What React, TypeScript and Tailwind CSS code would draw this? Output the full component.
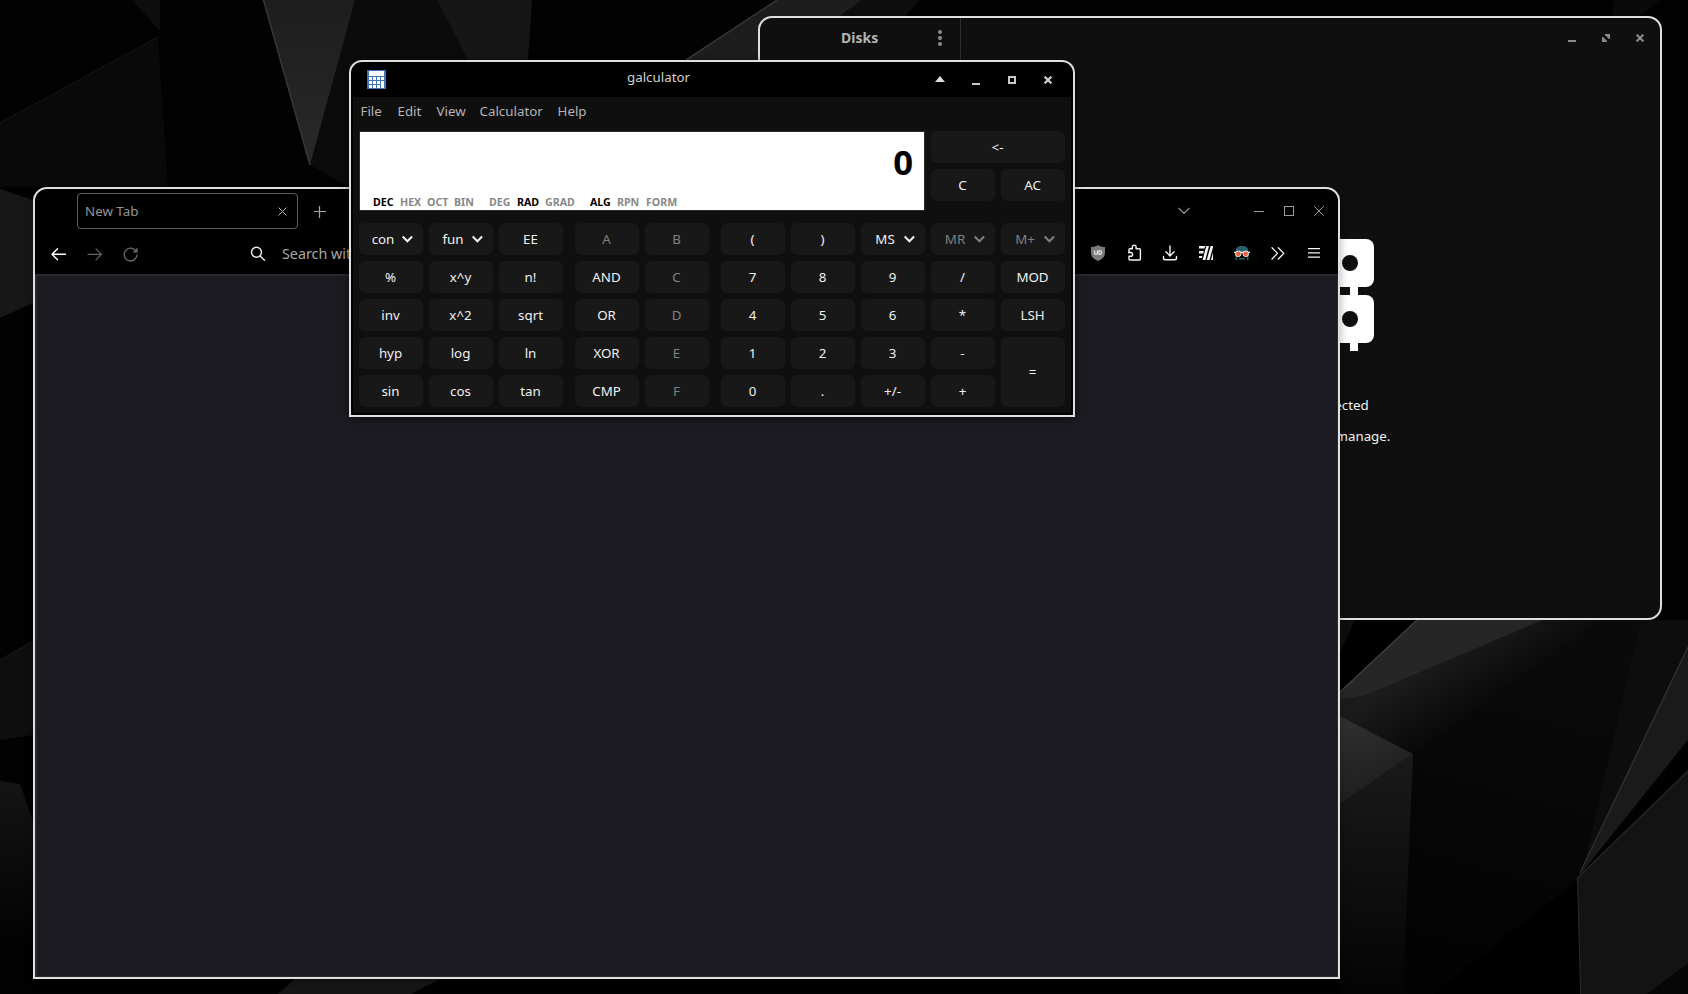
import React from "react";
import clsx from "clsx";

function Wallpaper() {
  return (
    <svg className="absolute inset-0" width="1688" height="994" viewBox="0 0 1688 994" aria-hidden="true">
      <defs>
        <linearGradient id="ridge" gradientUnits="userSpaceOnUse" x1="1450" y1="650" x2="1485" y2="705">
          <stop offset="0" stopColor="#1b1b1b" />
          <stop offset="1" stopColor="#090909" />
        </linearGradient>
        <linearGradient id="basin" gradientUnits="userSpaceOnUse" x1="1560" y1="650" x2="1480" y2="950">
          <stop offset="0" stopColor="#0a0a0a" />
          <stop offset="1" stopColor="#030303" />
        </linearGradient>
        <linearGradient id="cubeTop" gradientUnits="userSpaceOnUse" x1="1340" y1="725" x2="1370" y2="790">
          <stop offset="0" stopColor="#303030" />
          <stop offset="1" stopColor="#1f1f1f" />
        </linearGradient>
        <linearGradient id="cubeSide" x1="0" y1="0" x2="0" y2="1">
          <stop offset="0" stopColor="#1a1a1a" />
          <stop offset="1" stopColor="#040404" />
        </linearGradient>
        <linearGradient id="fade" x1="0" y1="0" x2="0" y2="1">
          <stop offset="0" stopColor="#141414" />
          <stop offset="1" stopColor="#030303" />
        </linearGradient>
        <linearGradient id="shard" x1="0" y1="0" x2="0" y2="1">
          <stop offset="0" stopColor="#1d1d1d" />
          <stop offset="1" stopColor="#292929" />
        </linearGradient>
      </defs>
      <rect width="1688" height="994" fill="#020202" />
      <polygon points="132,0 160,0 160,31" fill="#0d0d0d" />
      <polygon points="0,123 158,37 168,187 0,187" fill="#090909" />
      <path d="M0 123L158 37" stroke="#171717" />
      <polygon points="355,0 437,0 468,60 349,187 310,165" fill="#0b0b0b" />
      <polygon points="263,0 355,0 310,165" fill="url(#shard)" />
      <path d="M263.5 0L310 165" stroke="#373737" strokeWidth="1.5" />
      <polygon points="437,0 532,0 528,60 468,60" fill="#161616" />
      <polygon points="686,60 777,0 862,0 840,16 760,70" fill="#1d1d1d" />
      <polygon points="862,0 920,0 905,16 840,16" fill="#0d0d0d" />
      <path d="M686 60L777 0" stroke="#353535" strokeWidth="1.5" />
      <polygon points="1614,0 1660,0 1640,16 1612,16" fill="#0a0a0a" />
      <polygon points="0,189 33,200 33,303 0,318" fill="#171717" />
      <polygon points="0,660 33,641 33,735 0,740" fill="#0e0e0e" />
      <path d="M0 660L33 641" stroke="#1b1b1b" />
      <polygon points="0,781 20,784 33,821 33,940 0,940" fill="url(#fade)" />
      <polygon points="278,994 295,979 440,979 410,994" fill="#161616" />

      <polygon points="1340,620 1688,620 1688,994 1340,994" fill="url(#basin)" />
      <polygon points="1340,620 1417,620 1340,692" fill="#000" />
      <polygon points="1340,620 1355,620 1340,653" fill="#0d0d0d" />
      <polygon points="1417,620 1543,620 1367,695 1340,700 1340,692" fill="#262626" />
      <path d="M1417 620L1340 692" stroke="#404040" strokeWidth="1.3" />
      <polygon points="1543,620 1600,620 1423,747 1413,754 1340,716 1340,700 1367,695" fill="url(#ridge)" />
      <polygon points="1340,716 1413,754 1340,804" fill="url(#cubeTop)" />
      <polygon points="1340,804 1413,754 1403,994 1340,994" fill="url(#cubeSide)" />
      <polygon points="1641,620 1688,620 1688,647 1583,868" fill="#0d0d0d" />
      <polygon points="1688,645 1688,740 1600,850 1580,875" fill="#1a1a1a" />
      <path d="M1688 647L1580 873" stroke="#2e2e2e" strokeWidth="1.5" />
      <polygon points="1688,740 1688,771 1578,878 1600,850" fill="#010101" />
      <polygon points="1688,771 1577,878 1580,994 1688,994" fill="#131313" />
      <path d="M1688 771L1577.500 878L1580.500 994" fill="none" stroke="#262626" strokeWidth="1.5" />
      <polygon points="1647,994 1688,963 1688,994" fill="#060606" />
      <polygon points="1577,881 1433,994 1580,994" fill="#000" />
    </svg>
  );
}

function CloseGlyph({ className }: { className?: string }) {
  return (
    <svg className={className} width="8" height="8" viewBox="0 0 8 8" stroke="currentColor" strokeWidth="2.2">
      <path d="M.6 .6L7.400 7.400M7.400 .6L.6 7.400" />
    </svg>
  );
}

function DrivesIcon() {
  return (
    <svg className="mr-[2px]" width="128" height="112" viewBox="0 0 128 112" fill="#fff">
      <rect width="128" height="48" rx="8" />
      <rect y="56" width="128" height="48" rx="8" />
      <rect x="104" y="48" width="8" height="8" />
      <rect x="104" y="104" width="8" height="8" />
      <circle cx="104" cy="24" r="8" fill="#0f0f0f" />
      <circle cx="104" cy="80" r="8" fill="#0f0f0f" />
    </svg>
  );
}

function DisksWindow() {
  return (
    <section className="absolute left-[758px] top-[16px] flex h-[604px] w-[904px] overflow-hidden rounded-[14px] border-2 border-[#dfdfdf] bg-[#0f0f0f]">
      <div className="h-full w-[201px] border-r border-[#2e2e2e]">
        <header className="flex h-[40px] items-center pl-[81px] text-[#b4b4b4]">
          <h1 className="w-[93px] text-[14px] leading-[20px] font-bold">Disks</h1>
          <svg width="12" height="16" viewBox="0 0 12 16" fill="#8c8c8c">
            <circle cx="6" cy="2" r="2" />
            <circle cx="6" cy="8" r="2" />
            <circle cx="6" cy="14" r="2" />
          </svg>
        </header>
      </div>
      <div className="flex flex-1 flex-col">
        <header className="flex h-[40px] items-center justify-end gap-[26px] pr-[16px] text-[#8a8a8a]">
          <span className="mt-[6px] h-[2px] w-[8px] bg-[#8a8a8a]" />
          <svg width="8" height="8" viewBox="0 0 8 8" fill="currentColor">
            <path d="M3 0H8V5H7L5 3L3 1ZM0 3H1L3 5L5 7V8H0Z" />
          </svg>
          <CloseGlyph />
        </header>
        <div className="flex flex-col items-center pt-[181px] text-[#f2f2f2]">
          <DrivesIcon />
          <p className="mt-[44px] text-[13.33px] leading-[20px] whitespace-nowrap">No device selected</p>
          <p className="mt-[11px] pl-[5px] text-[13.33px] leading-[20px] whitespace-nowrap">Select device to manage.</p>
        </div>
      </div>
    </section>
  );
}

function BrowserWindow() {
  return (
    <section className="absolute left-[33px] top-[187px] flex h-[792px] w-[1307px] flex-col overflow-hidden rounded-t-[14px] border-2 border-[#dfdfdf] bg-black shadow-[0_2px_8px_rgba(0,0,0,0.3)]">
      <div className="flex h-[44px] items-start pt-[4px] pl-[42px]">
        <div className="flex h-[36px] w-[221px] items-center justify-between rounded-[4px] border border-[#5e5e5e] pr-[10px] pl-[7px] text-[#949494]">
          <span className="text-[13.33px] leading-[20px]">New Tab</span>
          <svg width="9" height="9" viewBox="0 0 9 9" stroke="#b8b8b8" strokeWidth="1">
            <path d="M.5 .5L8.500 8.500M8.500 .5L.5 8.500" />
          </svg>
        </div>
        <svg className="mt-[13px] ml-[16px]" width="12" height="12" viewBox="0 0 12 12" stroke="#a5a5a5" strokeWidth="1.2">
          <path d="M5.500 0V12M0 5.500H12" />
        </svg>
        <div className="ml-auto flex h-[36px] items-center pr-[14px] text-[#9c9c9c]">
          <svg className="mr-[64px]" width="12" height="8" viewBox="0 0 12 8" fill="none" stroke="currentColor" strokeWidth="1.2">
            <path d="M.5 .8L6 6.500L11.500 .8" />
          </svg>
          <span className="mr-[20px] h-px w-[10px] bg-[#9c9c9c]" />
          <span className="mr-[20px] h-[10px] w-[10px] border border-[#9c9c9c]" />
          <svg width="10" height="10" viewBox="0 0 10 10" stroke="currentColor" strokeWidth="1">
            <path d="M.2 .2L9.800 9.800M9.800 .2L.2 9.800" />
          </svg>
        </div>
      </div>

      <div className="flex h-[41px] items-center pr-[17px] pl-[16px]">
        <svg width="16" height="16" viewBox="0 0 16 16" fill="none" stroke="#fff" strokeWidth="1.4" strokeLinecap="round" strokeLinejoin="round">
          <path d="M14.500 8.300H1M6.500 2.800L1 8.300L6.500 13.800" />
        </svg>
        <svg className="ml-[20px]" width="16" height="16" viewBox="0 0 16 16" fill="none" stroke="#666" strokeWidth="1.2" strokeLinecap="round" strokeLinejoin="round">
          <path d="M1 8.300H14.500M9 2.800L14.500 8.300L9 13.800" />
        </svg>
        <svg className="ml-[20px]" width="16" height="16" viewBox="0 0 16 16" fill="none" stroke="#6a6a6a" strokeWidth="1.3" strokeLinecap="round">
          <path d="M14 9A6.400 6.400 0 1 1 12.300 4.200" />
          <path d="M14.400 2.200V6.200H10.400Z" fill="#6a6a6a" stroke="#6a6a6a" strokeWidth=".6" />
        </svg>
        <svg className="ml-[111px]" width="16" height="16" viewBox="0 0 16 16" fill="none" stroke="#ececec" strokeWidth="1.4" strokeLinecap="round">
          <circle cx="6.500" cy="6.200" r="5" />
          <path d="M10.100 9.900L14.500 14.300" />
        </svg>
        <span className="ml-[16px] text-[14.3px] leading-[20px] whitespace-nowrap text-[#a8a8a8]">Search with</span>

        <div className="ml-auto flex items-center">
          <div className="mr-[21px] mb-[2px] flex items-center">
            <svg width="16" height="16" viewBox="0 0 16 16">
              <path d="M8 0C10 1.500 12.500 2 15 2V7.500C15 12 12 14.500 8 16C4 14.500 1 12 1 7.500V2C3.500 2 6 1.500 8 0Z" fill="#7b7b7b" />
              <path d="M4.600 5.500V8Q4.600 9.400 6 9.400T7.400 8V5.500" fill="none" stroke="#e6e6e6" strokeWidth="1.2" />
              <path d="M9 5.500H9.700A1.900 1.900 0 0 1 9.700 9.300H9Z" fill="none" stroke="#e6e6e6" strokeWidth="1.2" />
            </svg>
            <svg className="ml-[20px]" width="17" height="17" viewBox="0 0 17 17" fill="none" stroke="#f4f4f4" strokeWidth="1.4" strokeLinejoin="round">
              <path d="M3 8V5.700Q3 4.700 4 4.700H6.300V3A1.900 1.900 0 0 1 10.100 3V4.700H13.400Q14.400 4.700 14.400 5.700V15Q14.400 16 13.400 16H4Q3 16 3 15V12.300H4.700A1.900 1.900 0 0 0 4.700 8.500H2" />
            </svg>
            <svg className="ml-[19px]" width="16" height="16" viewBox="0 0 16 16" fill="none" stroke="#f4f4f4" strokeWidth="1.4" strokeLinecap="round" strokeLinejoin="round">
              <path d="M8 1V10.500M3.900 6.800L8 10.900L12.100 6.800M1.500 11.500V13Q1.500 14.800 3.300 14.800H12.700Q14.500 14.800 14.500 13V11.500" />
            </svg>
            <svg className="ml-[20px]" width="16" height="16" viewBox="0 0 16 16" fill="#f2f2f2">
              <path d="M1 1H7.200L6.500 3.500H1ZM1 6H5.900L5.200 8.500H1ZM1 11H4.400L3.700 13H1ZM8.300 1H11L7.400 15H4.600ZM12.600 1H15V2.200L11.500 15H8.700ZM15 7.500V15H12.900Z" />
            </svg>
            <svg className="ml-[20px]" width="16" height="16" viewBox="0 0 16 16">
              <path d="M1.500 7C1.500 2.500 4 1 8 1S14.500 2.500 14.500 7L14.500 8H1.500Z" fill="#28606e" />
              <path d="M1.500 10H3V15H1.500ZM13 10H14.500V15H13ZM5 13H11V14.500H5Z" fill="#28606e" />
              <path d="M0 7.400H16" stroke="#f0ece8" strokeWidth="1.3" />
              <circle cx="4.300" cy="8.800" r="2.800" fill="#e8603f" stroke="#f0ece8" strokeWidth="1" />
              <circle cx="11.700" cy="8.800" r="2.800" fill="#e8603f" stroke="#f0ece8" strokeWidth="1" />
            </svg>
            <svg className="ml-[20px]" width="16" height="16" viewBox="0 0 16 16" fill="none" stroke="#f4f4f4" strokeWidth="1.3" strokeLinecap="round" strokeLinejoin="round">
              <path d="M2 2.800L7.500 8.400L2 14M8.300 2.800L13.800 8.400L8.300 14" />
            </svg>
          </div>
          <svg className="mb-[2px]" width="14" height="16" viewBox="0 0 14 16" fill="#f4f4f4">
            <path d="M1 3H13V4.300H1ZM1 7.200H13V8.500H1ZM1 11.400H13V12.700H1Z" />
          </svg>
        </div>
      </div>
      <div className="flex-1 border-t-2 border-r border-b border-l-2 border-[#2a2930] bg-[#1c1b22]" />
    </section>
  );
}

function CalculatorIcon() {
  return (
    <svg width="19" height="19" viewBox="0 0 19 19" shapeRendering="crispEdges">
      <rect width="19" height="19" fill="#4273b8" />
      <rect x="2" y="1" width="15" height="5" fill="#fff" />
      {[7, 11, 15].map((y) =>
        [2, 6, 10].map((x) => <rect key={`${x}-${y}`} x={x} y={y} width="3" height="3" fill="#fff" />),
      )}
      <rect x="14" y="7" width="3" height="3" fill="#fff" />
      <rect x="14" y="11" width="3" height="7" fill="#fff" />
    </svg>
  );
}

type KeyProps = { label: string; dim?: boolean; menu?: boolean; className?: string };

function Key({ label, dim, menu, className }: KeyProps) {
  return (
    <button
      type="button"
      className={clsx(
        "flex items-center rounded-[6px] bg-[#181818] text-[13.33px] leading-[20px]",
        menu ? "px-[7px]" : "justify-center pr-px",
        dim ? "text-[#808080]" : "text-[#f0f0f0]",
        className,
      )}
    >
      {menu ? (
        <>
          <span className="flex w-[34px] justify-center">{label}</span>
          <svg width="16" height="16" viewBox="0 0 16 16" fill="none" stroke="currentColor" strokeWidth="2">
            <path d="M2.700 5.500L7.400 10.300L12.100 5.500" />
          </svg>
        </>
      ) : (
        label
      )}
    </button>
  );
}

const functionKeys: KeyProps[] = [
  { label: "con", menu: true }, { label: "fun", menu: true }, { label: "EE" },
  { label: "%" }, { label: "x^y" }, { label: "n!" },
  { label: "inv" }, { label: "x^2" }, { label: "sqrt" },
  { label: "hyp" }, { label: "log" }, { label: "ln" },
  { label: "sin" }, { label: "cos" }, { label: "tan" },
];

const logicKeys: KeyProps[] = [
  { label: "A", dim: true }, { label: "B", dim: true },
  { label: "AND" }, { label: "C", dim: true },
  { label: "OR" }, { label: "D", dim: true },
  { label: "XOR" }, { label: "E", dim: true },
  { label: "CMP" }, { label: "F", dim: true },
];

const numberKeys: KeyProps[] = [
  { label: "(" }, { label: ")" }, { label: "MS", menu: true }, { label: "MR", menu: true, dim: true }, { label: "M+", menu: true, dim: true },
  { label: "7" }, { label: "8" }, { label: "9" }, { label: "/" }, { label: "MOD" },
  { label: "4" }, { label: "5" }, { label: "6" }, { label: "*" }, { label: "LSH" },
  { label: "1" }, { label: "2" }, { label: "3" }, { label: "-" }, { label: "=", className: "row-span-2" },
  { label: "0" }, { label: "." }, { label: "+/-" }, { label: "+" },
];

const modes = [
  { label: "DEC", on: true, width: "w-[27px]" },
  { label: "HEX", on: false, width: "w-[27px]" },
  { label: "OCT", on: false, width: "w-[27px]" },
  { label: "BIN", on: false, width: "w-[35px]" },
  { label: "DEG", on: false, width: "w-[28px]" },
  { label: "RAD", on: true, width: "w-[28px]" },
  { label: "GRAD", on: false, width: "w-[45px]" },
  { label: "ALG", on: true, width: "w-[27px]" },
  { label: "RPN", on: false, width: "w-[29px]" },
  { label: "FORM", on: false, width: "w-[32px]" },
];

const menus = [
  { label: "File", width: "w-[37px]" },
  { label: "Edit", width: "w-[39px]" },
  { label: "View", width: "w-[43px]" },
  { label: "Calculator", width: "w-[78px]" },
  { label: "Help", width: "w-[40px]" },
];

function CalculatorWindow() {
  return (
    <section className="absolute left-[349px] top-[60px] flex h-[357px] w-[726px] flex-col overflow-hidden rounded-t-[13px] border-2 border-[#dfdfdf] bg-black px-[2px] pb-[2px] shadow-[0_2px_8px_rgba(0,0,0,0.45)]">
      <header className="flex h-[35px] shrink-0 items-start pr-[19px] pl-[14px] text-[#d0d0d0]">
        <div className="mt-[8px]">
          <CalculatorIcon />
        </div>
        <h1 className="mt-[5px] ml-[241px] w-[308px] text-[13.33px] leading-[20px]">galculator</h1>
        <svg className="mt-[14px]" width="10" height="6" viewBox="0 0 10 6" fill="#dcdcdc">
          <path d="M5 0L10 6H0Z" />
        </svg>
        <span className="mt-[21px] ml-[27px] h-[2px] w-[8px] bg-[#c8c8c8]" />
        <span className="mt-[14px] ml-[28px] h-[8px] w-[8px] border-2 border-[#c8c8c8]" />
        <CloseGlyph className="mt-[14px] ml-[28px]" />
      </header>
      <div className="flex flex-1 flex-col bg-[#0f0f0f] px-[6px]">
        <nav className="flex h-[34px] pt-[4px] pl-[1.5px] text-[13.33px] leading-[20px] text-[#b4b4b4]">
          {menus.map((m) => (
            <span key={m.label} className={m.width}>{m.label}</span>
          ))}
        </nav>
        <div className="flex gap-[6px]">
          <div className="flex h-[80px] w-[566px] flex-col justify-between border border-[#2a2a2a] bg-white">
            <output className="pt-[10px] pr-[11px] text-right text-[34.67px] leading-[40px] font-bold text-black">0</output>
            <div className="flex pl-[13px] text-[10.67px] leading-[15px] font-bold">
              {modes.map((m) => (
                <span key={m.label} className={clsx(m.width, m.on ? "text-black" : "text-[#888]")}>{m.label}</span>
              ))}
            </div>
          </div>
          <div className="grid h-[70px] grid-cols-[64px_64px] grid-rows-2 gap-[6px]">
            <Key label="<-" className="col-span-2" />
            <Key label="C" />
            <Key label="AC" />
          </div>
        </div>
        <div className="mt-[12px] flex gap-[12px]">
          <div className="grid grid-cols-[64px_64px_64px] grid-rows-[32px_32px_32px_32px_32px] gap-[6px]">
            {functionKeys.map((k) => <Key key={k.label} {...k} />)}
          </div>
          <div className="grid grid-cols-[64px_64px] grid-rows-[32px_32px_32px_32px_32px] gap-[6px]">
            {logicKeys.map((k) => <Key key={k.label} {...k} />)}
          </div>
          <div className="grid grid-cols-[64px_64px_64px_64px_64px] grid-rows-[32px_32px_32px_32px_32px] gap-[6px]">
            {numberKeys.map((k) => <Key key={k.label} {...k} />)}
          </div>
        </div>
      </div>
    </section>
  );
}

export default function App() {
  return (
    <main className="relative h-[994px] w-[1688px] overflow-hidden bg-black font-['Noto_Sans',sans-serif]">
      <Wallpaper />
      <DisksWindow />
      <BrowserWindow />
      <CalculatorWindow />
    </main>
  );
}
